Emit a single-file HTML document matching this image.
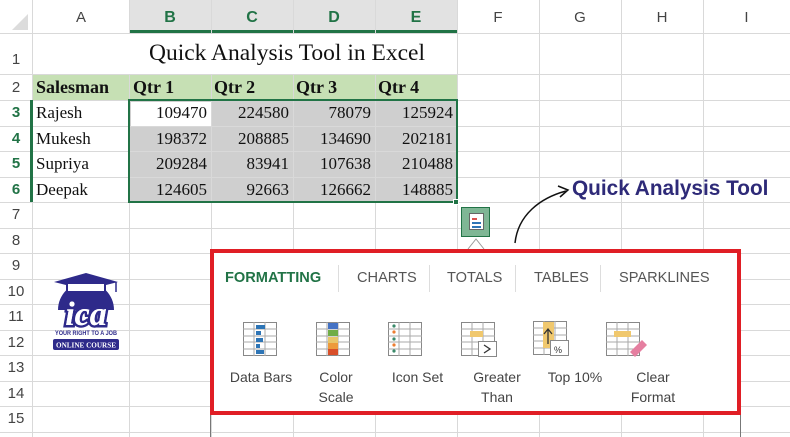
<!DOCTYPE html>
<html><head><meta charset="utf-8"><style>
*{margin:0;padding:0;box-sizing:border-box}
body{width:790px;height:437px;overflow:hidden;background:#fff;position:relative;font-family:"Liberation Sans",sans-serif}
.a{position:absolute}
.vl{position:absolute;top:0;width:1px;height:437px;background:#d9d9d9}
.hl{position:absolute;left:0;height:1px;width:790px;background:#d9d9d9}
.ch{position:absolute;top:0;height:32px;line-height:36px;text-align:center;font-size:15px;color:#444}
.rh{position:absolute;left:0;width:32px;text-align:center;font-size:15px;color:#444}
.c{position:absolute;font-family:"Liberation Serif",serif;font-size:17px;color:#111}
.n{text-align:right;padding-right:4px;width:82px}
.tab{position:absolute;top:270px;font-size:14.6px;color:#555}
.lbl{position:absolute;top:367px;font-size:14px;color:#444;text-align:center;line-height:20px}
</style></head><body>
<div class="a" style="left:129px;top:0;width:328px;height:32px;background:#e2e2e2"></div>
<div class="a" style="left:129px;top:30px;width:328px;height:3px;background:#217346"></div>
<div class="a" style="left:33px;top:74px;width:424px;height:26px;background:#c6e0b4"></div>
<div class="a" style="left:129px;top:100px;width:328px;height:102px;background:#cfcfcf"></div>
<div class="a" style="left:131px;top:102px;width:80px;height:24px;background:#fff"></div>
<div class="vl" style="left:32px"></div><div class="vl" style="left:129px"></div><div class="vl" style="left:211px"></div><div class="vl" style="left:293px"></div><div class="vl" style="left:375px"></div><div class="vl" style="left:457px"></div><div class="vl" style="left:539px"></div><div class="vl" style="left:621px"></div><div class="vl" style="left:703px"></div>
<div class="hl" style="top:33px"></div><div class="hl" style="top:74px"></div><div class="hl" style="top:100px"></div><div class="hl" style="top:126px"></div><div class="hl" style="top:151px"></div><div class="hl" style="top:177px"></div><div class="hl" style="top:202px"></div><div class="hl" style="top:228px"></div><div class="hl" style="top:253px"></div><div class="hl" style="top:279px"></div><div class="hl" style="top:304px"></div><div class="hl" style="top:330px"></div><div class="hl" style="top:355px"></div><div class="hl" style="top:381px"></div><div class="hl" style="top:406px"></div><div class="hl" style="top:432px"></div>
<div class="a" style="left:33px;top:34px;width:424px;height:40px;background:#fff"></div>
<div class="a" style="left:0;top:0;width:32px;height:33px;background:#fff"></div>
<div class="a" style="left:12px;top:14px;width:0;height:0;border-left:16px solid transparent;border-bottom:16px solid #dcdcdc"></div>
<div class="ch" style="left:33px;width:96px">A</div>
<div class="ch" style="left:129px;width:82px;color:#217346;font-weight:bold;font-size:16px">B</div>
<div class="ch" style="left:211px;width:82px;color:#217346;font-weight:bold;font-size:16px">C</div>
<div class="ch" style="left:293px;width:82px;color:#217346;font-weight:bold;font-size:16px">D</div>
<div class="ch" style="left:375px;width:82px;color:#217346;font-weight:bold;font-size:16px">E</div>
<div class="ch" style="left:457px;width:82px">F</div>
<div class="ch" style="left:539px;width:82px">G</div>
<div class="ch" style="left:621px;width:82px">H</div>
<div class="ch" style="left:703px;width:87px">I</div>
<div class="rh" style="top:51px">1</div><div class="rh" style="top:79px">2</div>
<div class="rh" style="top:104px;color:#217346;font-weight:bold">3</div><div class="rh" style="top:130px;color:#217346;font-weight:bold">4</div><div class="rh" style="top:155px;color:#217346;font-weight:bold">5</div><div class="rh" style="top:181px;color:#217346;font-weight:bold">6</div>
<div class="rh" style="top:206px">7</div><div class="rh" style="top:232px">8</div><div class="rh" style="top:257px">9</div><div class="rh" style="top:283px">10</div><div class="rh" style="top:308px">11</div><div class="rh" style="top:334px">12</div><div class="rh" style="top:359px">13</div><div class="rh" style="top:385px">14</div><div class="rh" style="top:410px">15</div>
<div class="a" style="left:30px;top:100px;width:3px;height:102px;background:#217346"></div>
<div class="c" style="left:149px;top:40px;font-size:23.5px">Quick Analysis Tool in Excel</div>
<div class="c" style="left:36px;top:77px;font-weight:bold;font-size:18px">Salesman</div>
<div class="c" style="left:133px;top:77px;font-weight:bold;font-size:18px">Qtr 1</div>
<div class="c" style="left:214px;top:77px;font-weight:bold;font-size:18px">Qtr 2</div>
<div class="c" style="left:296px;top:77px;font-weight:bold;font-size:18px">Qtr 3</div>
<div class="c" style="left:378px;top:77px;font-weight:bold;font-size:18px">Qtr 4</div>
<div class="c" style="left:36px;top:103px">Rajesh</div><div class="c" style="left:36px;top:129px">Mukesh</div><div class="c" style="left:36px;top:154px">Supriya</div><div class="c" style="left:36px;top:180px">Deepak</div>
<div class="c n" style="left:129px;top:103px">109470</div><div class="c n" style="left:211px;top:103px">224580</div><div class="c n" style="left:293px;top:103px">78079</div><div class="c n" style="left:375px;top:103px">125924</div>
<div class="c n" style="left:129px;top:129px">198372</div><div class="c n" style="left:211px;top:129px">208885</div><div class="c n" style="left:293px;top:129px">134690</div><div class="c n" style="left:375px;top:129px">202181</div>
<div class="c n" style="left:129px;top:154px">209284</div><div class="c n" style="left:211px;top:154px">83941</div><div class="c n" style="left:293px;top:154px">107638</div><div class="c n" style="left:375px;top:154px">210488</div>
<div class="c n" style="left:129px;top:180px">124605</div><div class="c n" style="left:211px;top:180px">92663</div><div class="c n" style="left:293px;top:180px">126662</div><div class="c n" style="left:375px;top:180px">148885</div>
<div class="a" style="left:128px;top:99px;width:330px;height:104px;border:2px solid #217346"></div>
<div class="a" style="left:453px;top:199px;width:6px;height:6px;background:#217346;border:1px solid #fff"></div>
<div class="a" style="left:461px;top:207px;width:29px;height:30px;background:#7fb695;border:1px solid #217346"></div>
<div class="a" style="left:469px;top:213px;width:15px;height:17px;background:#fff;border:1px solid #666"></div>
<div class="a" style="left:472px;top:218px;width:5px;height:2px;background:#d9534f"></div>
<div class="a" style="left:472px;top:222px;width:9px;height:2px;background:#2e75b6"></div>
<div class="a" style="left:472px;top:226px;width:9px;height:2px;background:#2e75b6"></div>
<svg class="a" style="left:0;top:0" width="790" height="437"><path d="M468 249 L476 239 L484 249" fill="#fff" stroke="#999"/><path d="M515 243 C518 215 540 198 566 191" fill="none" stroke="#111" stroke-width="1.5"/><path d="M558 186 L568 190 L560 197" fill="none" stroke="#111" stroke-width="1.5"/></svg>
<div class="a" style="left:572px;top:177px;font-size:20.8px;font-weight:bold;color:#2e2a78">Quick Analysis Tool</div>
<div class="a" style="left:210px;top:249px;width:531px;height:166px;border:4px solid #e01e25;background:#fff"></div>
<div class="a" style="left:210px;top:415px;width:1px;height:22px;background:#777"></div><div class="a" style="left:740px;top:415px;width:1px;height:22px;background:#777"></div>
<div class="tab" style="left:225px;color:#217346;font-weight:bold">FORMATTING</div>
<div class="tab" style="left:357px">CHARTS</div>
<div class="tab" style="left:447px">TOTALS</div>
<div class="tab" style="left:534px">TABLES</div>
<div class="tab" style="left:619px">SPARKLINES</div>
<div class="a" style="left:338px;top:265px;width:1px;height:27px;background:#ddd"></div><div class="a" style="left:429px;top:265px;width:1px;height:27px;background:#ddd"></div><div class="a" style="left:515px;top:265px;width:1px;height:27px;background:#ddd"></div><div class="a" style="left:600px;top:265px;width:1px;height:27px;background:#ddd"></div>
<svg class="a" style="left:0;top:0" width="790" height="437" fill="none">
<defs>
<g id="grid"><rect x="0.5" y="0.5" width="33" height="33" fill="#fff" stroke="#888"/><path d="M0 7H34M0 14H34M0 20H34M0 27H34M11 0V34M22 0V34" stroke="#aaa"/></g>
</defs>
<use href="#grid" x="243" y="322"/>
<rect x="256" y="325" width="9" height="4" fill="#2e75b6"/><rect x="256" y="331" width="5" height="4" fill="#2e75b6"/><rect x="256" y="338" width="7" height="4" fill="#2e75b6"/><rect x="256" y="344" width="4" height="4" fill="#2e75b6"/><rect x="256" y="350" width="8" height="4" fill="#2e75b6"/>
<use href="#grid" x="316" y="322"/>
<rect x="328" y="323" width="10" height="6" fill="#4472c4"/><rect x="328" y="330" width="10" height="6" fill="#70ad47"/><rect x="328" y="337" width="10" height="6" fill="#e8c66a"/><rect x="328" y="343" width="10" height="6" fill="#ed9a3b"/><rect x="328" y="349" width="10" height="6" fill="#d94f2a"/>
<use href="#grid" x="388" y="322"/>
<circle cx="394" cy="326" r="1.6" fill="#3a8a6a"/><circle cx="394" cy="332" r="1.6" fill="#ed7d31"/><circle cx="394" cy="339" r="1.6" fill="#3a8a6a"/><circle cx="394" cy="345" r="1.6" fill="#ed7d31"/><circle cx="394" cy="351" r="1.6" fill="#3a8a6a"/>
<use href="#grid" x="461" y="322"/>
<rect x="470" y="331" width="13" height="6" fill="#f0c86e"/><rect x="478.5" y="341.5" width="18" height="15" fill="#fff" stroke="#888"/>
<use href="#grid" x="533" y="321"/>
<rect x="543" y="322" width="11" height="26" fill="#f0c86e"/><rect x="550.5" y="340.5" width="18" height="15" fill="#fff" stroke="#888"/>
<use href="#grid" x="606" y="322"/>
<rect x="614" y="331" width="17" height="6" fill="#f0c86e"/>
<path d="M548 344 V330 M544 334 L548 329 L552 334" stroke="#333" stroke-width="1.3"/>
<path d="M484 345 L490 349 L484 353" stroke="#333" stroke-width="1.3"/>
<text x="554" y="353" font-size="9" fill="#333" font-family="Liberation Sans">%</text>
<path d="M630 352 L642 340 L647 345 L635 357 Z" fill="#e57fa0"/>
</svg>
<div class="lbl" style="left:226px;width:70px">Data Bars</div>
<div class="lbl" style="left:306px;width:60px">Color<br>Scale</div>
<div class="lbl" style="left:380px;width:75px">Icon Set</div>
<div class="lbl" style="left:462px;width:70px">Greater<br>Than</div>
<div class="lbl" style="left:540px;width:70px">Top 10%</div>
<div class="lbl" style="left:618px;width:70px">Clear<br>Format</div>
<svg class="a" style="left:50px;top:270px" width="72" height="85">
<path d="M8 40 A28 28 0 1 1 64 40 Z" fill="#2e2a8a"/>
<path d="M4 12 L36 3 L68 12 L36 20 Z" fill="#2e2a8a"/>
<rect x="17" y="13" width="38" height="9" fill="#fff" stroke="#2e2a8a" stroke-width="2"/>
<path d="M66 12 V22" stroke="#2e2a8a" stroke-width="1.5"/>
<text x="36" y="55" text-anchor="middle" font-family="Liberation Serif" font-style="italic" font-weight="bold" font-size="34" fill="#fff" stroke="#2e2a8a" stroke-width="5" paint-order="stroke">ica</text>
<text x="36" y="55" text-anchor="middle" font-family="Liberation Serif" font-style="italic" font-weight="bold" font-size="34" fill="#fff">ica</text>
<text x="36" y="65" text-anchor="middle" font-family="Liberation Sans" font-weight="bold" font-size="6" fill="#2e2a8a" textLength="62" lengthAdjust="spacingAndGlyphs">YOUR RIGHT TO A JOB</text>
<rect x="3" y="69" width="66" height="11" rx="2" fill="#2e2a8a"/>
<text x="36" y="77.5" text-anchor="middle" font-family="Liberation Serif" font-weight="bold" font-size="7.5" fill="#fff" textLength="60" lengthAdjust="spacingAndGlyphs">ONLINE COURSE</text>
</svg>
</body></html>
